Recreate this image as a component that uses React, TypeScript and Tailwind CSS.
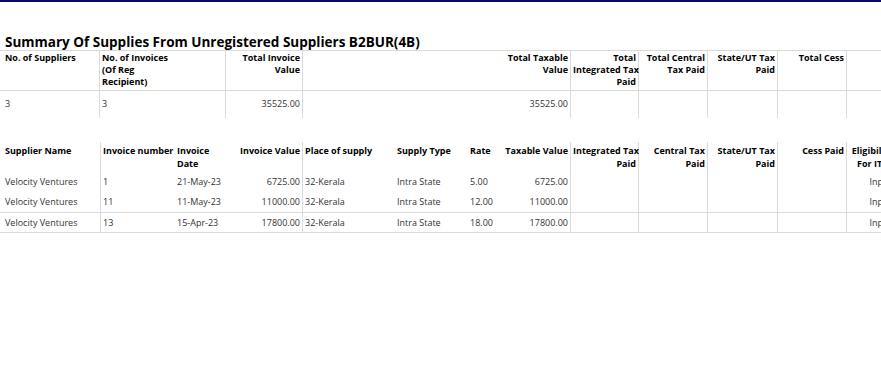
const summaryCols = ["w-[100px]", "w-[126px]", "w-[77px]", "w-[268px]", "w-[68px]", "w-[69px]", "w-[70px]", "w-[69px]", "w-[60px]"];

const summaryHead = [
  { label: ["No. of Suppliers"], align: "text-left" },
  { label: ["No. of Invoices", "(Of Reg", "Recipient)"], align: "text-left" },
  { label: ["Total Invoice", "Value"], align: "text-right" },
  { label: ["Total Taxable", "Value"], align: "text-right" },
  { label: ["Total", "Integrated Tax", "Paid"], align: "text-right" },
  { label: ["Total Central", "Tax Paid"], align: "text-right" },
  { label: ["State/UT Tax", "Paid"], align: "text-right" },
  { label: ["Total Cess"], align: "text-right" },
  { label: [""], align: "text-right" },
];

const summaryRow = ["3", "3", "35525.00", "35525.00", "", "", "", "", ""];

// detail columns: width, align, right border
const detailCols = [
  { w: "w-[101px]", align: "text-left", line: true, head: ["Supplier Name"] },
  { w: "w-[74px]", align: "text-left", line: false, head: ["Invoice number"] },
  { w: "w-[51px]", align: "text-left", line: false, head: ["Invoice", "Date"] },
  { w: "w-[77px]", align: "text-right", line: true, head: ["Invoice Value"] },
  { w: "w-[92px]", align: "text-left", line: false, head: ["Place of supply"] },
  { w: "w-[73px]", align: "text-left", line: false, head: ["Supply Type"] },
  { w: "w-[35px]", align: "text-left", line: false, head: ["Rate"] },
  { w: "w-[68px]", align: "text-right", line: true, head: ["Taxable Value"] },
  { w: "w-[68px]", align: "text-right", line: true, head: ["Integrated Tax", "Paid"] },
  { w: "w-[69px]", align: "text-right", line: true, head: ["Central Tax", "Paid"] },
  { w: "w-[70px]", align: "text-right", line: true, head: ["State/UT Tax", "Paid"] },
  { w: "w-[69px]", align: "text-right", line: true, head: ["Cess Paid"] },
  { w: "w-[51px]", align: "text-right", line: false, head: ["Eligibility", "For ITC"] },
];

const invoices = [
  ["Velocity Ventures", "1", "21-May-23", "6725.00", "32-Kerala", "Intra State", "5.00", "6725.00", "", "", "", "", "Inputs"],
  ["Velocity Ventures", "11", "11-May-23", "11000.00", "32-Kerala", "Intra State", "12.00", "11000.00", "", "", "", "", "Inputs"],
  ["Velocity Ventures", "13", "15-Apr-23", "17800.00", "32-Kerala", "Intra State", "18.00", "17800.00", "", "", "", "", "Inputs"],
];

const App = () => {
  return (
    <div className="w-[881px] h-[392px] overflow-hidden bg-white font-['Open_Sans',sans-serif] text-[9px] text-black">
      <div className="h-[2px] bg-[#0b0b6c]" />

      <h1 className="mt-[32px] pl-[5px] text-[13.5px] leading-[16px] font-bold whitespace-nowrap">
        Summary Of Supplies From Unregistered Suppliers B2BUR(4B)
      </h1>

      {/* Summary table */}
      <div className="border-t border-[#dadada] w-[881px]">
        <div className="flex border-b border-[#dadada]">
          {summaryHead.map((h, i) => (
            <div
              key={i}
              className={`${summaryCols[i]} shrink-0 h-[39px] ${i === 0 ? "pl-[5px]" : "pl-[2px]"} pr-[2px] pt-[1px] leading-[12px] font-bold whitespace-nowrap ${h.align} ${i < 8 ? "border-r border-[#dadada]" : ""}`}
            >
              {h.label.map((l, j) => (
                <div key={j}>{l}</div>
              ))}
            </div>
          ))}
        </div>
        <div className="flex">
          {summaryRow.map((v, i) => (
            <div
              key={i}
              className={`${summaryCols[i]} shrink-0 h-[27px] ${i === 0 ? "pl-[5px]" : "pl-[2px]"} pr-[2px] pt-[7px] leading-[12px] text-[#333] ${i < 2 ? "text-left" : "text-right"} ${i < 8 ? "border-r border-[#dadada]" : ""}`}
            >
              {v}
            </div>
          ))}
        </div>
      </div>

      {/* Invoice details */}
      <div className="mt-[24px] w-[881px]">
        <div className="flex">
          {detailCols.map((c, i) => (
            <div
              key={i}
              className={`${c.w} shrink-0 h-[30px] ${i === 0 ? "pl-[5px]" : "pl-[2px]"} pr-[2px] pt-[2px] leading-[13px] font-bold whitespace-nowrap ${i === 12 ? "text-center" : c.align} ${c.line ? "border-r border-[#dadada]" : ""}`}
            >
              {c.head.map((l, j) => (
                <div key={j}>{l}</div>
              ))}
            </div>
          ))}
        </div>
        {invoices.map((row, r) => (
          <div
            key={r}
            className={`flex ${r === 2 ? "border-y border-[#dadada]" : ""}`}
          >
            {row.map((v, i) => (
              <div
                key={i}
                className={`${detailCols[i].w} shrink-0 ${r === 2 ? "h-[19px] leading-[19px]" : "h-[20px] leading-[20px]"} ${i === 0 ? "pl-[5px]" : "pl-[2px]"} pr-[2px] text-[#333] whitespace-nowrap ${detailCols[i].align} ${detailCols[i].line ? "border-r border-[#dadada]" : ""}`}
              >
                {v}
              </div>
            ))}
          </div>
        ))}
      </div>
    </div>
  );
};

export default App;
